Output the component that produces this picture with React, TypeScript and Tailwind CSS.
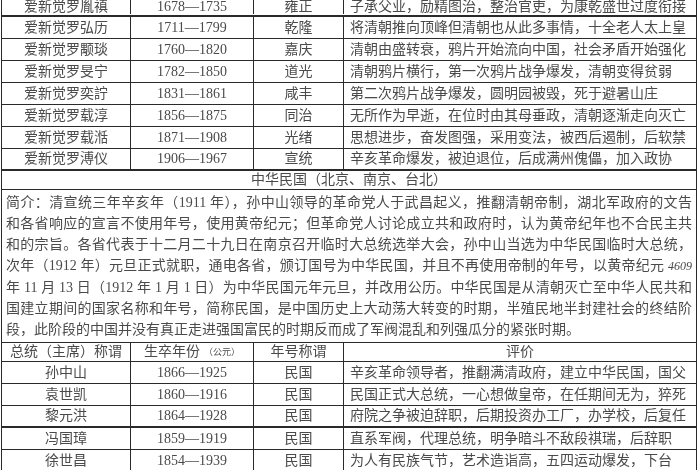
const qingRows = [
  ["爱新觉罗胤禛", "1678—1735", "雍正", "子承父业，励精图治，整治官吏，为康乾盛世过度衔接"],
  ["爱新觉罗弘历", "1711—1799", "乾隆", "将清朝推向顶峰但清朝也从此多事情，十全老人太上皇"],
  ["爱新觉罗颙琰", "1760—1820", "嘉庆", "清朝由盛转衰，鸦片开始流向中国，社会矛盾开始强化"],
  ["爱新觉罗旻宁", "1782—1850", "道光", "清朝鸦片横行，第一次鸦片战争爆发，清朝变得贫弱"],
  ["爱新觉罗奕詝", "1831—1861", "咸丰", "第二次鸦片战争爆发，圆明园被毁，死于避暑山庄"],
  ["爱新觉罗载淳", "1856—1875", "同治", "无所作为早逝，在位时由其母垂政，清朝逐渐走向灭亡"],
  ["爱新觉罗载湉", "1871—1908", "光绪", "思想进步，奋发图强，采用变法，被西后遏制，后软禁"],
  ["爱新觉罗溥仪", "1906—1967", "宣统", "辛亥革命爆发，被迫退位，后成满州傀儡，加入政协"],
];

const mingguoRows = [
  ["孙中山", "1866—1925", "民国", "辛亥革命领导者，推翻满清政府，建立中华民国，国父"],
  ["袁世凯", "1860—1916", "民国", "民国正式大总统，一心想做皇帝，在任期间无为，猝死"],
  ["黎元洪", "1864—1928", "民国", "府院之争被迫辞职，后期投资办工厂，办学校，后复任"],
  ["冯国璋", "1859—1919", "民国", "直系军阀，代理总统，明争暗斗不敌段祺瑞，后辞职"],
  ["徐世昌", "1854—1939", "民国", "为人有民族气节，艺术造诣高，五四运动爆发，下台"],
];

const intro = [
  "简介：清宣统三年辛亥年（1911 年），孙中山领导的革命党人于武昌起义，推翻清朝帝制，湖北军政府的文告",
  "和各省响应的宣言不使用年号，使用黄帝纪元；但革命党人讨论成立共和政府时，认为黄帝纪年也不合民主共",
  "和的宗旨。各省代表于十二月二十九日在南京召开临时大总统选举大会，孙中山当选为中华民国临时大总统，",
  "次年（1912 年）元旦正式就职，通电各省，颁订国号为中华民国，并且不再使用帝制的年号，以黄帝纪元 4609",
  "年 11 月 13 日（1912 年 1 月 1 日）为中华民国元年元旦，并改用公历。中华民国是从清朝灭亡至中华人民共和",
  "国建立期间的国家名称和年号，简称民国，是中国历史上大动荡大转变的时期，半殖民地半封建社会的终结阶",
  "段，此阶段的中国并没有真正走进强国富民的时期反而成了军阀混乱和列强瓜分的紧张时期。",
];

function Row({ cells, thick, first }: { cells: string[]; thick?: boolean; first?: boolean }) {
  return (
    <div
      className={`grid grid-cols-[129px_123px_90px_1fr] border-[#2a2a2a] ${first ? "h-[17px] pb-[2px]" : "h-[22px]"} ${thick ? "border-b-2" : "border-b"}`}
    >
      <div className="flex items-center justify-center border-r border-[#2a2a2a]">{cells[0]}</div>
      <div className="flex items-center justify-center border-r border-[#2a2a2a]">{cells[1]}</div>
      <div className="flex items-center justify-center border-r border-[#2a2a2a]">{cells[2]}</div>
      <div className="flex items-center whitespace-nowrap pl-[6px]">{cells[3]}</div>
    </div>
  );
}

export default function App() {
  return (
    <div className="h-[470px] w-[700px] overflow-hidden bg-white">
      <div
        className="ml-[1px] w-[696px] border-x border-[#2a2a2a] text-[14px] leading-none text-[#4a4a4a] blur-[0.4px]"
        style={{ fontFamily: '"Liberation Serif", "Noto Sans CJK SC", serif' }}
      >
        {qingRows.map((r, i) => (
          <Row key={r[0]} cells={r} first={i === 0} thick={i === 0 || i === qingRows.length - 1} />
        ))}

        <div className="flex h-[19px] items-center justify-center border-b border-[#2a2a2a]">
          中华民国（北京、南京、台北）
        </div>

        <div className="border-b border-[#2a2a2a] px-[4px] py-[2px] leading-[21px]">
          {intro.map((line, i) => (
            <div
              key={i}
              className={`whitespace-nowrap ${i < intro.length - 1 ? "text-justify [text-align-last:justify]" : ""}`}
            >
              {i === 3 ? (
                <>
                  {line.slice(0, -4)}
                  <span className="text-[12px] italic">4609</span>
                </>
              ) : (
                line
              )}
            </div>
          ))}
        </div>

        <div className="grid h-[19px] grid-cols-[129px_123px_90px_1fr] border-b border-[#2a2a2a]">
          <div className="flex items-center justify-center border-r border-[#2a2a2a]">总统（主席）称谓</div>
          <div className="flex items-center justify-center gap-1 border-r border-[#2a2a2a]">
            生卒年份<span className="text-[9px]">（公元）</span>
          </div>
          <div className="flex items-center justify-center border-r border-[#2a2a2a]">年号称谓</div>
          <div className="flex items-center justify-center">评价</div>
        </div>

        {mingguoRows.map((r, i) => (
          <Row key={r[0]} cells={r} thick={i === 2} />
        ))}
      </div>
    </div>
  );
}
